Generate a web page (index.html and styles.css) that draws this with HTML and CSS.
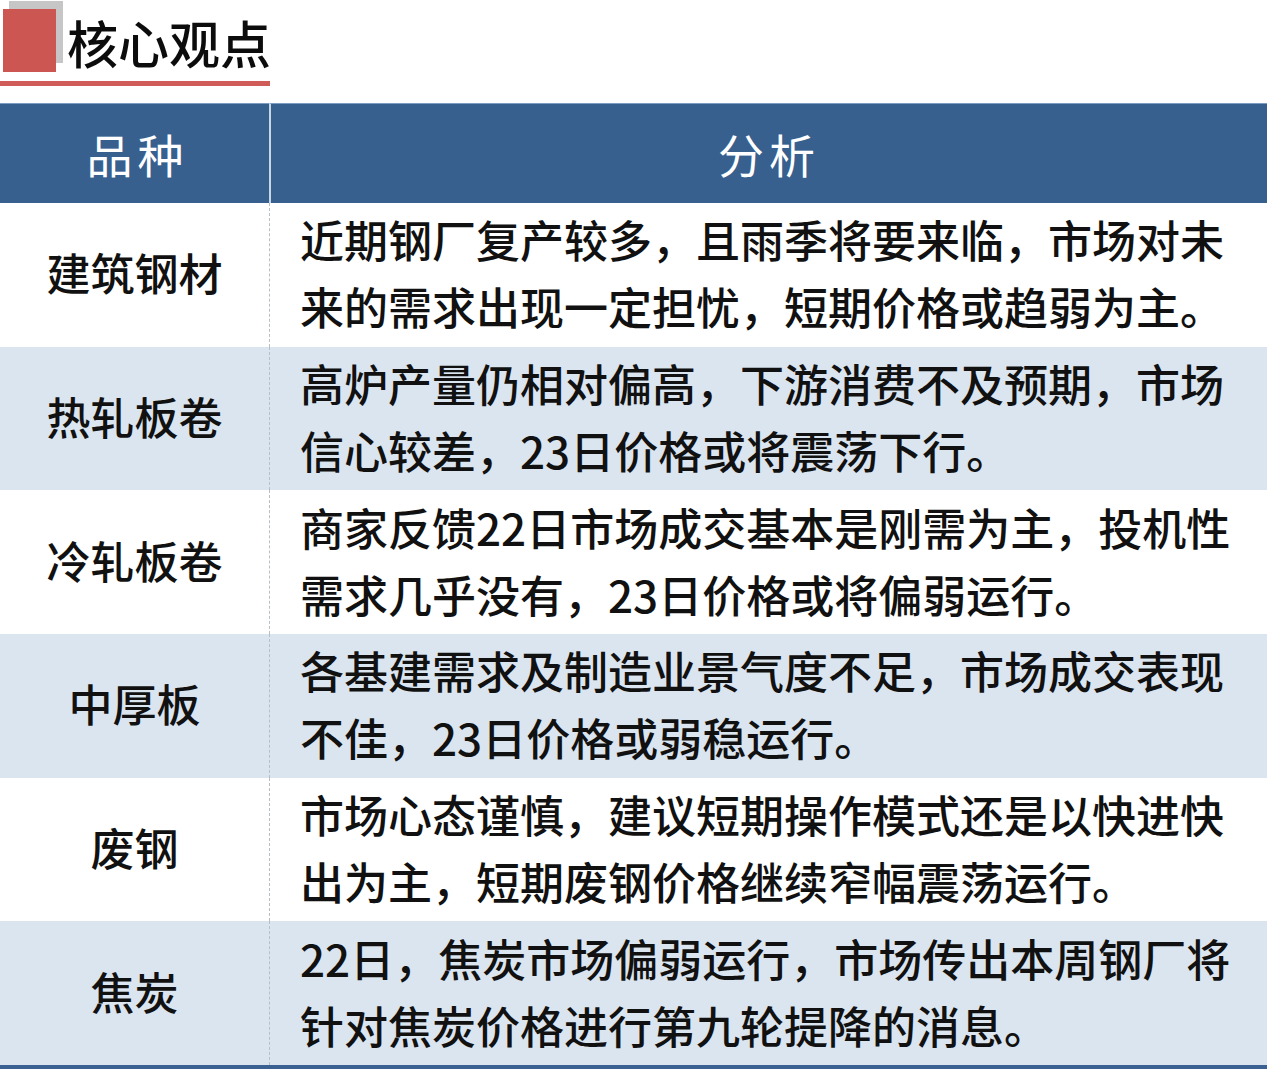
FILE: index.html
```html
<!DOCTYPE html>
<html lang="zh-CN">
<head>
<meta charset="utf-8">
<title>核心观点</title>
<link rel="stylesheet" href="styles.css">
</head>
<body>
<div class="page">
  <div class="title">
    <div class="mark"><span class="sq-grey"></span><span class="sq-red"></span></div>
    <h1>核心观点</h1>
  </div>
  <div class="rule"></div>
  <div class="table">
    <div class="th th-kind">品种</div>
    <div class="th th-ana">分析</div>

    <div class="kind row-w">建筑钢材</div>
    <div class="ana row-w"><span>近期钢厂复产较多，且雨季将要来临，市场对未</span><span>来的需求出现一定担忧，短期价格或趋弱为主。</span></div>

    <div class="kind row-b">热轧板卷</div>
    <div class="ana row-b"><span>高炉产量仍相对偏高，下游消费不及预期，市场</span><span>信心较差，23日价格或将震荡下行。</span></div>

    <div class="kind row-w">冷轧板卷</div>
    <div class="ana row-w"><span>商家反馈22日市场成交基本是刚需为主，投机性</span><span>需求几乎没有，23日价格或将偏弱运行。</span></div>

    <div class="kind row-b">中厚板</div>
    <div class="ana row-b"><span>各基建需求及制造业景气度不足，市场成交表现</span><span>不佳，23日价格或弱稳运行。</span></div>

    <div class="kind row-w">废钢</div>
    <div class="ana row-w"><span>市场心态谨慎，建议短期操作模式还是以快进快</span><span>出为主，短期废钢价格继续窄幅震荡运行。</span></div>

    <div class="kind row-b">焦炭</div>
    <div class="ana row-b"><span>22日，焦炭市场偏弱运行，市场传出本周钢厂将</span><span>针对焦炭价格进行第九轮提降的消息。</span></div>
  </div>
</div>
</body>
</html>
```

FILE: styles.css
```css
* { box-sizing: border-box; }
html, body { margin: 0; padding: 0; background: #fff; }
body {
  font-family: "Noto Sans CJK SC", "Noto Sans", sans-serif;
  color: #111;
}
.page { width: 1267px; }

.title {
  display: flex;
  align-items: flex-start;
  height: 81px;
}
.mark {
  position: relative;
  width: 63px;
  height: 72px;
  flex: none;
}
.sq-grey {
  position: absolute;
  left: 9px; top: 1px;
  width: 54px; height: 62px;
  background: #c6c6c6;
}
.sq-red {
  position: absolute;
  left: 3px; top: 9px;
  width: 53px; height: 63px;
  background: #cc5651;
}
.title h1 {
  margin: 0 0 0 4px;
  font-size: 51px;
  font-weight: 500;
  line-height: 84px;
  color: #0c0c0c;
  letter-spacing: 0;
}
.rule {
  width: 270px;
  height: 5px;
  background: #d05c5a;
  margin-bottom: 17px;
}

.table {
  display: grid;
  grid-template-columns: 269px 998px;
  grid-template-rows: 100px repeat(6, 143.67px);
  border-bottom: 4px solid #3a6192;
}
.th {
  background: #37608f;
  color: #fff;
  font-size: 46px;
  font-weight: 400;
  letter-spacing: 5px;
  display: flex;
  align-items: center;
  justify-content: center;
  border-top: 1px solid #7d9cc2;
  padding-bottom: 2px;
}
.th-kind { padding-left: 6px; }
.th-ana {
  border-left: 2px solid #c9d6e6;
}
.row-w { background: #ffffff; }
.row-b { background: #dbe5f0; }

.kind {
  display: flex;
  align-items: center;
  justify-content: center;
  font-size: 44px;
  font-weight: 500;
  color: #111;
  padding-bottom: 5px;
}
.ana {
  border-left: 1px dashed #b9bec6;
  display: flex;
  flex-direction: column;
  justify-content: center;
  padding-left: 30px;
  font-size: 44px;
  font-weight: 500;
  line-height: 67px;
  color: #111;
  padding-bottom: 3px;
}
.ana span { display: block; white-space: nowrap; }
```
